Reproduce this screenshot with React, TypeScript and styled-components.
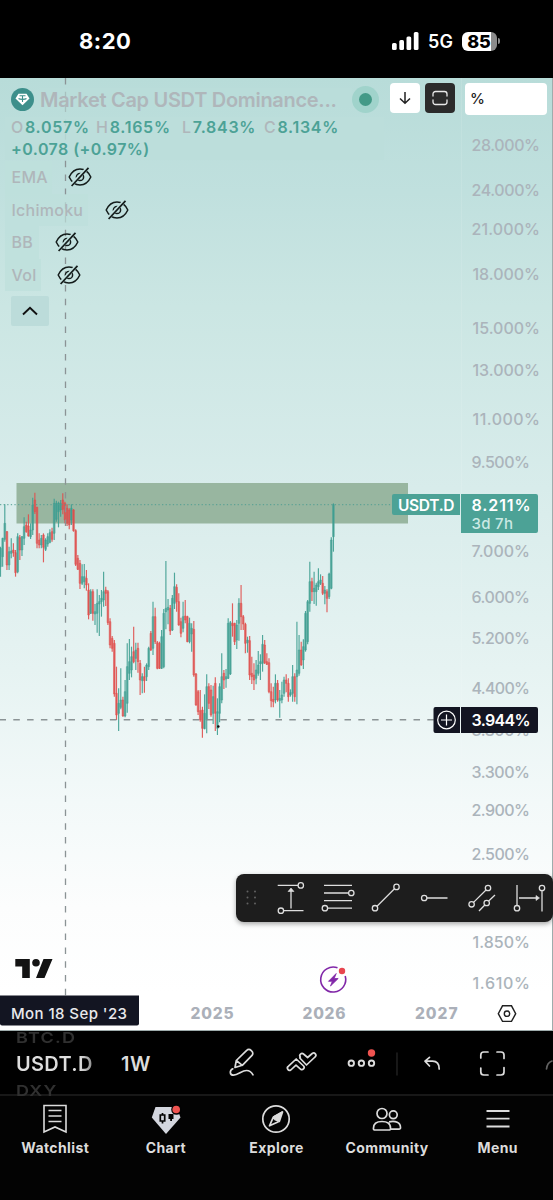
import React from "react";
import styled, { createGlobalStyle } from "styled-components";

const Global = createGlobalStyle`
  body { margin: 0; background: #000; }
  * { box-sizing: border-box; }
`;

const Screen = styled.div`
  width: 553px;
  height: 1200px;
  display: flex;
  flex-direction: column;
  overflow: hidden;
  background: #000;
  font-family: Inter, "Liberation Sans", sans-serif;
`;

/* ---------- status bar ---------- */
const StatusBar = styled.header`
  height: 78px;
  flex: none;
  display: flex;
  align-items: center;
  justify-content: space-between;
  padding: 4px 53px 0 79px;
  color: #fff;
`;
const Clock = styled.span`
  font-size: 22px;
  font-weight: 700;
  letter-spacing: 0.5px;
`;
const StatusRight = styled.div`
  display: flex;
  align-items: center;
`;
const Network = styled.span`
  font-size: 18px;
  font-weight: 600;
  letter-spacing: 0.2px;
  margin: 1px 9px 0 9px;
  width: 25px;
`;
const Battery = styled.div`
  width: 35px;
  height: 19px;
  border-radius: 6px;
  background: linear-gradient(to right, #fff 84%, #8b8b8b 84%);
  color: #000;
  font-size: 18px;
  font-weight: 800;
  line-height: 19px;
  text-align: center;
  padding-right: 1px;
`;
const BatteryTip = styled.div`
  width: 2px;
  height: 6px;
  margin-left: 1px;
  border-radius: 0 2px 2px 0;
  background: #8b8b8b;
`;

/* ---------- chart ---------- */
const ChartArea = styled.main`
  position: relative;
  height: 953px;
  flex: none;
  display: grid;
  grid-template-columns: 461px 1fr;
  align-items: start;
  overflow: hidden;
  background: linear-gradient(#b8dcd9 0%, #c0e0de 12%, #cbe6e3 24%, #d8eceb 43%, #e6f3f2 62%, #f3f9f9 76%, #fcfdfd 87%, #fff 96%);
`;
const ChartSvg = styled.svg`
  position: absolute;
  left: 0;
  top: 0;
`;
const Legend = styled.section`
  position: relative;
  padding: 5px 6px 0 5px;
  color: #afb6ba;
`;
const TitleRow = styled.div`
  display: flex;
  align-items: center;
  height: 33px;
  padding-left: 6px;
`;
const Title = styled.h1`
  margin: 0 0 0 6px;
  width: 312px;
  font-size: 20px;
  font-weight: 600;
  letter-spacing: -0.3px;
  white-space: nowrap;
  background: rgba(186, 221, 218, 0.6);
`;
const Live = styled.span`
  width: 27px;
  height: 27px;
  border-radius: 50%;
  background: #a0d3cb;
  display: grid;
  place-items: center;
  &::after {
    content: "";
    width: 13px;
    height: 13px;
    border-radius: 50%;
    background: #439a87;
  }
`;
const SquareButton = styled.button<{ $dark?: boolean }>`
  width: 30px;
  height: 30px;
  padding: 0;
  border: 0;
  border-radius: 4px;
  display: grid;
  place-items: center;
  margin: 0 0 3px ${(p) => (p.$dark ? 5 : 11)}px;
  background: ${(p) => (p.$dark ? "#2b2b2b" : "#fff")};
`;
const Ohlc = styled.div`
  width: 379px;
  padding: 0 0 0 6px;
  margin-top: 1px;
  font-size: 16px;
  font-weight: 600;
  line-height: 21.5px;
  color: #4ca296;
  background: rgba(188, 222, 219, 0.85);
  white-space: nowrap;
`;
const OhlcLine = styled.div`
  display: flex;
`;
const Quote = styled.span<{ $w?: number }>`
  width: ${(p) => (p.$w ? `${p.$w}px` : "auto")};
  letter-spacing: ${(p) => (p.$w ? 0.72 : 0.45)}px;
  i { font-style: normal; font-weight: 500; color: #afb6ba; margin-right: 1px; }
`;
const Indicators = styled.div`
  padding-top: 1px;
`;
const Indicator = styled.div<{ $gap: number }>`
  display: flex;
  align-items: center;
  gap: ${(p) => p.$gap}px;
  height: 32.5px;
`;
const IndicatorName = styled.span<{ $w: number }>`
  width: ${(p) => p.$w}px;
  height: 32.5px;
  line-height: 32.5px;
  padding-left: 6.5px;
  background: rgba(190, 224, 220, 0.7);
  font-size: 16px;
  font-weight: 500;
  letter-spacing: 0.25px;
`;
const Collapse = styled.button`
  margin: 5px 0 0 6px;
  width: 38px;
  height: 30px;
  border: 0;
  padding: 0;
  border-radius: 2px;
  background: #bcdcda;
  display: grid;
  place-items: center;
`;
const UnitBox = styled.div`
  position: relative;
  margin: 5px 0 0 4px;
  width: 82px;
  height: 32px;
  border-radius: 4px;
  background: #fff;
  color: #222;
  font-size: 15px;
  font-weight: 500;
  line-height: 32px;
  padding-left: 5px;
`;
const DrawingBar = styled.div`
  position: absolute;
  left: 236px;
  top: 796px;
  width: 317px;
  height: 48px;
  border-radius: 8px;
  background: #1d1d1d;
  box-shadow: 0 2px 5px rgba(0, 0, 0, 0.35);
  overflow: hidden;
`;

/* ---------- symbol bar ---------- */
const SymbolBar = styled.div`
  height: 65px;
  flex: none;
  display: flex;
  border-bottom: 2px solid #181818;
  color: #dcdcdc;
`;
const Wheel = styled.div`
  width: 105px;
  padding-left: 16px;
  height: 65px;
  overflow: hidden;
  display: flex;
  flex-direction: column;
`;
const WheelItem = styled.span<{ $dim?: boolean }>`
  display: block;
  flex: none;
  transform-origin: 0 50%;
  height: ${(p) => (p.$dim ? 13 : 40)}px;
  line-height: ${(p) => (p.$dim ? 13 : 40)}px;
  font-size: ${(p) => (p.$dim ? 18 : 20)}px;
  font-weight: 600;
  letter-spacing: ${(p) => (p.$dim ? 1.2 : 0.3)}px;
  color: ${(p) => (p.$dim ? "#303030" : "transparent")};
  transform: ${(p) => (p.$dim ? "scaleY(0.84)" : "none")};
  background: ${(p) => (p.$dim ? "none" : "linear-gradient(to right, #dedede 64px, #777 80px)")};
  background-clip: ${(p) => (p.$dim ? "border-box" : "text")};
`;
const Interval = styled.span`
  width: 110px;
  padding: 0 0 0 16px;
  line-height: 66px;
  font-size: 20px;
  font-weight: 600;
  letter-spacing: 0.5px;
`;
const Actions = styled.svg`
  flex: none;
`;

/* ---------- tabs ---------- */
const Tabs = styled.nav`
  flex: 1;
  display: grid;
  grid-template-columns: repeat(5, 1fr);
  background: #030303;
`;
const Tab = styled.div`
  display: flex;
  flex-direction: column;
  align-items: center;
  padding-top: 5px;
  color: #dcdcdc;
  font-size: 14px;
  font-weight: 700;
  letter-spacing: 0.4px;
  span { margin-top: 4px; line-height: 18px; }
`;

/* Weekly bars: direction, high, low, body top, body bottom (thirds of a pixel). */
type Bar = [0 | 1, number, number, number, number];
const bars: Bar[] = [
  [1,230,320,235,290],[1,203,290,205,260],[1,103,215,160,208],[0,183,300,185,285],[1,230,300,245,285],
  [1,205,265,243,250],[0,220,260,240,248],[0,240,320,248,308],[1,190,310,200,305],[0,195,270,203,240],
  [1,198,258,200,240],[1,142,225,170,205],[0,155,188,165,185],[0,133,200,168,198],[1,160,207,180,200],
  [1,83,195,105,180],[0,68,132,90,125],[0,110,235,112,220],[0,190,235,210,225],[1,195,235,205,225],
  [0,190,277,195,232],[1,205,243,210,238],[1,190,230,200,222],[1,178,220,188,217],[0,173,215,185,208],
  [1,86,210,100,190],[1,92,155,100,148],[1,95,172,100,125],[1,90,140,100,120],[0,70,133,90,118],
  [0,95,160,100,150],[0,103,168,115,160],[0,115,178,120,165],[1,103,165,115,150],[0,117,185,120,182],
  [0,178,288,182,283],[0,255,300,265,298],[0,270,357,280,340],[1,283,345,320,340],[1,282,355,320,335],
  [0,300,362,325,345],[0,340,448,360,435],[1,358,432,365,430],[0,358,452,365,430],[1,402,465,425,432],
  [1,358,488,400,430],[1,375,498,395,402],[1,360,440,385,395],[1,305,410,365,390],[0,350,408,360,370],
  [0,360,465,365,458],[0,445,535,455,525],[0,498,545,505,535],[0,510,680,520,672],[0,590,750,670,735],
  [1,655,783,700,730],[1,595,718,690,712],[0,680,740,690,738],[1,630,742,665,738],[1,520,728,590,700],
  [1,507,630,575,610],[1,530,622,560,600],[0,470,580,545,575],[1,518,600,540,565],[0,518,608,535,575],
  [0,570,675,580,630],[1,610,670,620,632],[0,590,668,620,632],[1,580,633,585,620],[1,530,600,535,590],
  [0,483,543,490,540],[1,395,555,440,535],[0,413,522,440,515],[0,513,598,518,595],[0,515,597,520,595],
  [1,480,597,500,595],[1,417,595,430,590],[1,273,478,415,425],[1,387,463,412,420],[0,405,495,415,483],
  [1,375,483,385,480],[1,308,417,350,400],[0,343,425,352,395],[0,370,467,395,465],[0,443,502,455,490],
  [1,395,487,440,475],[0,390,460,438,450],[0,437,517,440,515],[1,443,520,460,515],[1,460,545,475,492],
  [0,453,620,478,615],[0,609,707,612,705],[0,660,735,665,725],[0,660,755,722,750],[0,710,803,720,775],
  [1,673,778,730,776],[1,613,790,650,750],[0,640,717,650,700],[0,645,740,660,735],[1,647,762,680,730],
  [0,622,783,640,730],[1,685,795,725,775],[1,640,757,650,730],[1,550,700,620,690],[0,600,657,610,630],
  [1,597,653,620,627],[1,445,627,460,625],[1,453,615,458,612],[0,400,500,460,467],[0,458,525,460,515],
  [1,450,537,465,510],[1,385,512,400,460],[0,345,480,400,440],[0,435,480,440,462],[0,458,550,463,520],
  [1,500,548,510,518],[0,498,630,512,615],[0,560,642,610,620],[0,580,660,615,630],[1,570,643,600,625],
  [1,543,617,585,610],[1,553,630,575,582],[1,495,605,523,580],[0,510,582,525,578],[0,550,585,575,583],
  [0,565,670,578,665],[0,640,712,665,692],[0,650,712,688,695],[1,613,700,640,690],[0,630,695,640,690],
  [1,660,743,685,692],[1,635,700,675,690],[1,620,680,630,670],[0,613,667,630,640],[0,625,695,640,680],
  [1,658,680,668,675],[1,585,695,620,670],[0,610,695,620,680],[1,455,703,600,620],[1,495,617,540,610],
  [0,515,587,540,585],[1,508,597,530,570],[1,423,545,430,540],[1,390,523,395,515],[1,275,425,335,400],
  [0,323,393,335,365],[1,305,402,355,365],[1,338,407,345,365],[1,295,360,335,350],[1,313,345,330,340],
  [0,318,375,340,370],[1,348,403,360,370],[0,358,427,365,385],[1,308,387,312,380],[1,202,358,210,355],
  [1,100,245,104,200],
];

const ticks: [string, number, number][] = [
  ["28.000%", 145, 471.5], ["24.000%", 190, 471.5], ["21.000%", 229.5, 471.5], ["18.000%", 274.5, 472.5],
  ["15.000%", 328, 472.5], ["13.000%", 370, 472.5], ["11.000%", 419, 472.5], ["9.500%", 462, 471.5],
  ["7.000%", 551.5, 471.5], ["6.000%", 597, 471.5], ["5.200%", 638.5, 471.5], ["4.400%", 688, 471.5],
  ["3.800%", 730.5, 471.5], ["3.300%", 772.5, 471.5], ["2.900%", 810, 471.5], ["2.500%", 854, 471.5],
  ["1.850%", 942.5, 472.5], ["1.610%", 983, 472.5],
];

const EyeOff = () => (
  <svg width="24" height="20" viewBox="0 0 24 20" fill="none" stroke="#141c1b" strokeWidth="1.5">
    <path d="M1.2 10C3.6 4.8 7.2 2 12 2s8.4 2.800 10.800 8C20.400 15.200 16.800 18 12 18S3.600 15.200 1.200 10Z" />
    <circle cx="12" cy="10" r="3.600" />
    <path d="M3 18.500 19.600 .8" stroke="#c2e1df" strokeWidth="3.400" />
    <path d="M3.600 19 20.500 .8" strokeWidth="1.700" />
  </svg>
);

const Chart = () => (
  <ChartSvg width="553" height="953" viewBox="0 78 553 953" fontFamily="Inter, sans-serif">
    <path d="M461.500 78V1000" stroke="#fff" strokeOpacity=".1" />
    <path d="M16.500 483H408V523.500H16.500Z" fill="#98b6a0" />
    <g transform="translate(0 470) scale(.33333)">
      {bars.map(([up, h, l, t, b], i) => {
        const x = 1.5 + i * 6.444;
        const c = up ? "#3f9f91" : "#e04f4c";
        return (
          <g key={i}>
            <path d={`M${x} ${h}V${l}`} stroke={c} strokeWidth="3.500" strokeOpacity=".9" />
            <path d={`M${x - 2.6} ${t}H${x + 2.6}V${Math.max(b, t + 4)}H${x - 2.6}Z`} fill={c} fillOpacity=".6" stroke={c} strokeWidth="1.800" strokeOpacity=".8" />
          </g>
        );
      })}
    </g>
    <path d="M0 504.700H392" stroke="#519e92" strokeDasharray="1.300 2.300" />
    <path d="M65.500 78V996" stroke="#8b9395" strokeWidth="1.300" strokeDasharray="6.500 7.300" />
    <path d="M0 719.700H434" stroke="#8b9395" strokeWidth="1.500" strokeDasharray="6.500 7.300" strokeDashoffset=".5" />
    <circle cx="218.300" cy="726.500" r="1.300" fill="#111" />
    <g fill="#abb4bb" fontSize="16" fontWeight="500">
      {ticks.map(([s, y, x]) => (
        <text key={s} x={x} y={y + 5.7} textLength={s.length === 7 ? 540 - x : x > 472 ? 530 - x : 58.5}>{s}</text>
      ))}
    </g>
    <g fill="#abb0b9" fontSize="15.500" fontWeight="800">
      <text x="190.500" y="1019.300" textLength="43">2025</text>
      <text x="302.500" y="1019.300" textLength="43">2026</text>
      <text x="415" y="1019.300" textLength="42.500">2027</text>
    </g>

    <path d="M394 494H460V515H394a2 2 0 0 1-2-2V496a2 2 0 0 1 2-2Z" fill="#4ca296" />
    <path d="M461 494H536a2 2 0 0 1 2 2V531a2 2 0 0 1-2 2H461Z" fill="#4ca296" />
    <text x="398" y="511" fill="#fff" fontSize="15.500" fontWeight="600" textLength="56.500">USDT.D</text>
    <text x="471.500" y="511" fill="#fff" fontSize="16" fontWeight="600" textLength="59">8.211%</text>
    <text x="471.500" y="528.500" fill="#cbe9e4" fontSize="15" fontWeight="500" textLength="41.500">3d 7h</text>

    <path d="M435.500 707H460V733H435.500a2 2 0 0 1-2-2V709a2 2 0 0 1 2-2ZM461 707H536a2 2 0 0 1 2 2V731a2 2 0 0 1-2 2H461Z" fill="#131522" />
    <g fill="none" stroke="#fff" strokeWidth="1.200">
      <circle cx="446.500" cy="720" r="8.800" />
      <path d="M441 720h11M446.500 714.500v11" />
    </g>
    <text x="471.500" y="725.800" fill="#fff" fontSize="16" fontWeight="600" textLength="59">3.944%</text>

    <g fill="#131313">
      <path d="M15.300 959H29.800V978H22.200V966.500H15.300ZM43.500 959H52.500L44.500 978H36Z" />
      <circle cx="36" cy="962.800" r="3.800" />
    </g>

    <path d="M0 995.500H139V1023.500a2 2 0 0 1-2 2H2a2 2 0 0 1-2-2Z" fill="#131522" />
    <text x="11" y="1018.500" fill="#e9e9ec" fontSize="15" fontWeight="500" textLength="116">Mon 18 Sep '23</text>

    <g fill="none" stroke="#8127a8" strokeWidth="1.600">
      <path d="M337.500 967.800A12.500 12.500 0 1 0 345.200 976" />
      <path d="M336.200 973.500 328.500 981.300H332.300L330.500 986 338.200 978.500H334.200Z" fill="#8127a8" strokeWidth=".8" />
    </g>
    <circle cx="342" cy="971" r="3.200" fill="#e8454f" />
    <g fill="none" stroke="#202020" strokeWidth="1.400">
      <path d="M502.500 1005.800H511.500L515.700 1013.700 511.500 1021.400H502.500L498.300 1013.700Z" />
      <circle cx="507" cy="1013.700" r="2.700" />
    </g>
    <path d="M552.500 78V1031M0 1030.500H553" stroke="#9eacac" />
  </ChartSvg>
);

const DrawingTools = () => (
  <svg width="317" height="48" viewBox="236 874 317 48" fill="none" stroke="#dedede" strokeWidth="1.300">
    <g fill="#626262" stroke="none">
      {[891.5, 897.5, 903.5].flatMap((y) => [247.5, 255].map((x) => <circle key={`${x}${y}`} cx={x} cy={y} r="1" />))}
    </g>
    <path d="M277.700 885.400H298M303.500 910.700H283.500M291 908.500V889" />
    <path d="M288 891.500 291 888 294 891.500Z" fill="#dedede" strokeWidth=".6" />
    <circle cx="300.800" cy="885.400" r="2.700" /><circle cx="280.900" cy="910.700" r="2.700" />
    <path d="M324 885.400H352M324 893H348.600M324 900.600H352M327.700 908.200H352" />
    <circle cx="351.300" cy="893" r="2.700" /><circle cx="324.900" cy="908.200" r="2.700" />
    <path d="M377 906.200 394.500 888.800" />
    <circle cx="396.500" cy="886.900" r="2.700" /><circle cx="375" cy="908.200" r="2.700" />
    <path d="M427 898H447.500" /><circle cx="424.200" cy="898" r="2.700" />
    <path d="M473.500 902.400 486 890M479 911 484.800 905M488.700 901 495 895" />
    <circle cx="488" cy="888" r="2.700" /><circle cx="471.600" cy="904.300" r="2.700" /><circle cx="486.700" cy="903" r="2.700" />
    <path d="M517 885V905.400M519 898H536M542 890.800V911.500" />
    <path d="M536 895.500 539.500 898 536 900.500Z" fill="#dedede" strokeWidth=".6" />
    <circle cx="517" cy="908.200" r="2.700" /><circle cx="542" cy="888" r="2.700" />
  </svg>
);

const ToolIcons = () => (
  <Actions width="338" height="63" viewBox="215 1031 338 63" fill="none" stroke="#dcdcdc" strokeWidth="1.700" strokeLinecap="round" strokeLinejoin="round">
    <path d="M235 1067.500 236.300 1060.500 246.700 1050.300a3 3 0 0 1 4.300 0l.8.800a3 3 0 0 1 .2 4.300L242.300 1065.300 235 1067.500ZM236.300 1060.500 242.300 1065.300" />
    <path d="M232.800 1068.800C229.300 1070.500 229.500 1075.200 233.500 1075.200C238 1075.200 242 1070.500 246.500 1070.500C249.500 1070.500 251.500 1072 253 1074.800" />
    <path d="M288.500 1066.200 296.200 1059 303.600 1066a2.200 2.200 0 0 1-3.100 3.100L296 1065.200 290.800 1070a2.200 2.200 0 0 1-2.300-3.800Z" />
    <path d="M300.300 1057a2.200 2.200 0 0 1 3.200-3L307.600 1057.500 312.200 1053.500a2.200 2.200 0 0 1 2.800 3.500L306.500 1065 299.800 1058Z" />
    <g strokeWidth="1.900">
      <circle cx="351.300" cy="1063.200" r="2.700" /><circle cx="361.400" cy="1063.200" r="2.700" /><circle cx="371.500" cy="1063.200" r="2.700" />
    </g>
    <circle cx="371.500" cy="1053" r="3.700" fill="#ef5350" stroke="none" />
    <path d="M397 1053V1075" stroke="#252525" strokeWidth="1.300" />
    <path d="M429.500 1057.300 425 1061.200 429.500 1066M425.500 1061.200H432.500C437 1061.200 439.200 1064 439.200 1069" />
    <path d="M480.800 1058V1055a3 3 0 0 1 3-3H488M497 1052h4a3 3 0 0 1 3 3v3.500M504 1067.500v4.500a3 3 0 0 1-3 3h-4M488 1075h-4.200a3 3 0 0 1-3-3v-4" />
    <path d="M546.500 1069C547 1064 549 1062 552 1061" stroke="#626262" />
  </Actions>
);

export default function App() {
  return (
    <Screen>
      <Global />
      <StatusBar>
        <Clock>8:20</Clock>
        <StatusRight>
          <svg width="27" height="18" viewBox="0 0 27 18" fill="#fff">
            <rect x="0" y="11" width="4.700" height="7" rx="1.500" /><rect x="7.300" y="8" width="4.700" height="10" rx="1.500" />
            <rect x="14.500" y="4.500" width="4.700" height="13.500" rx="1.500" /><rect x="21.800" y="0" width="4.700" height="18" rx="1.500" />
          </svg>
          <Network>5G</Network>
          <Battery>85</Battery>
          <BatteryTip />
        </StatusRight>
      </StatusBar>

      <ChartArea>
        <Chart />
        <Legend>
          <TitleRow>
            <svg width="23" height="23" viewBox="0 0 23 23">
              <circle cx="11.500" cy="11.500" r="11.500" fill="#3d8f8b" />
              <path d="M7.500 5.700H15.500L18.500 10.500 11.500 17.300 4.500 10.500Z" fill="#fff" />
              <path d="M8.500 7.800H14.500M11.500 8V14M7.500 10.500C9 11.700 14 11.700 15.500 10.500" fill="none" stroke="#3d8f8b" strokeWidth="1.100" />
            </svg>
            <Title>Market Cap USDT Dominance...</Title>
            <Live />
            <SquareButton>
              <svg width="14" height="14" viewBox="0 0 14 14" fill="none" stroke="#222" strokeWidth="1.500"><path d="M7 1V12M2 7.500 7 12.300 12 7.500" /></svg>
            </SquareButton>
            <SquareButton $dark>
              <svg width="16" height="16" viewBox="0 0 16 16" fill="none" stroke="#e9e9e9" strokeWidth="1.300" strokeLinecap="round">
                <path d="M1 6V4a2.500 2.500 0 0 1 2.500-2.500h9A2.500 2.500 0 0 1 15 4v2M1 10v2a2.500 2.500 0 0 0 2.500 2.500h9A2.500 2.500 0 0 0 15 12v-2" />
              </svg>
            </SquareButton>
          </TitleRow>
          <Ohlc>
            <OhlcLine>
              <Quote $w={85}><i>O</i>8.057%</Quote>
              <Quote $w={86}><i>H</i>8.165%</Quote>
              <Quote $w={82}><i>L</i>7.843%</Quote>
              <Quote $w={80}><i>C</i>8.134%</Quote>
            </OhlcLine>
            <Quote>+0.078 (+0.97%)</Quote>
          </Ohlc>
          <Indicators>
            <Indicator $gap={16}><IndicatorName $w={47}>EMA</IndicatorName><EyeOff /></Indicator>
            <Indicator $gap={17}><IndicatorName $w={83}>Ichimoku</IndicatorName><EyeOff /></Indicator>
            <Indicator $gap={16}><IndicatorName $w={34}>BB</IndicatorName><EyeOff /></Indicator>
            <Indicator $gap={16}><IndicatorName $w={36}>Vol</IndicatorName><EyeOff /></Indicator>
          </Indicators>
          <Collapse>
            <svg width="16" height="10" viewBox="0 0 16 10" fill="none" stroke="#111" strokeWidth="1.900"><path d="M1 8.500 8 1.800 15 8.500" /></svg>
          </Collapse>
        </Legend>
        <UnitBox>%</UnitBox>
        <DrawingBar><DrawingTools /></DrawingBar>
      </ChartArea>

      <SymbolBar>
        <Wheel>
          <WheelItem $dim>BTC.D</WheelItem>
          <WheelItem>USDT.D</WheelItem>
          <WheelItem $dim>DXY</WheelItem>
        </Wheel>
        <Interval>1W</Interval>
        <ToolIcons />
      </SymbolBar>

      <Tabs>
        <Tab>
          <svg width="32" height="34" viewBox="0 0 32 34" fill="none" stroke="#dcdcdc" strokeWidth="1.600">
            <path d="M5 4.500H27V31L16 26 5 31ZM9.500 9.500H22.500M9.500 15H22.500M9.500 20.500H22.500" />
          </svg>
          <span>Watchlist</span>
        </Tab>
        <Tab>
          <svg width="32" height="34" viewBox="0 0 32 34">
            <path d="M5.500 6H26.500L30.500 16.500 16 33 1.800 16.500Z" fill="#d3d6de" />
            <path d="M12.500 12V14.500M12.500 20V22.500M10.300 14H14.700V20H10.300Z" fill="none" stroke="#030303" strokeWidth="1.700" />
            <path d="M18.500 13H23.500V18H22V20H20.200V18H18.500Z" fill="#030303" />
            <circle cx="26.500" cy="8.500" r="5.300" fill="#030303" />
            <circle cx="26.200" cy="8.500" r="3.800" fill="#ef5350" />
          </svg>
          <span>Chart</span>
        </Tab>
        <Tab>
          <svg width="32" height="34" viewBox="0 0 32 34" fill="none" stroke="#dcdcdc" strokeWidth="1.700" strokeLinejoin="round">
            <circle cx="16" cy="18" r="13.200" />
            <path d="M22.500 11 19.300 20.500 14 15.800Z" fill="#dcdcdc" />
            <path d="M22.500 11 13.200 16.300 9.500 24.800 18.500 20.800M13.200 16.300 15.300 18.800 18.800 20" />
          </svg>
          <span>Explore</span>
        </Tab>
        <Tab>
          <svg width="32" height="34" viewBox="0 0 32 34" fill="none" stroke="#dcdcdc" strokeWidth="1.700">
            <circle cx="11" cy="12.500" r="5" /><circle cx="22.300" cy="13.800" r="3.900" />
            <path d="M2.500 27C2.500 22 6 20.500 11 20.500S19.500 22 19.500 27A1.500 1.500 0 0 1 18 29H4A1.500 1.500 0 0 1 2.500 27ZM18 20.800C24.500 19.700 29.500 21 29.500 26.500A1.500 1.500 0 0 1 28 28.200H19.500" />
          </svg>
          <span>Community</span>
        </Tab>
        <Tab>
          <svg width="32" height="34" viewBox="0 0 32 34" fill="none" stroke="#dcdcdc" strokeWidth="1.800">
            <path d="M4.500 10H27.500M4.500 17.700H27.500M4.500 25.500H27.500" />
          </svg>
          <span>Menu</span>
        </Tab>
      </Tabs>
    </Screen>
  );
}
